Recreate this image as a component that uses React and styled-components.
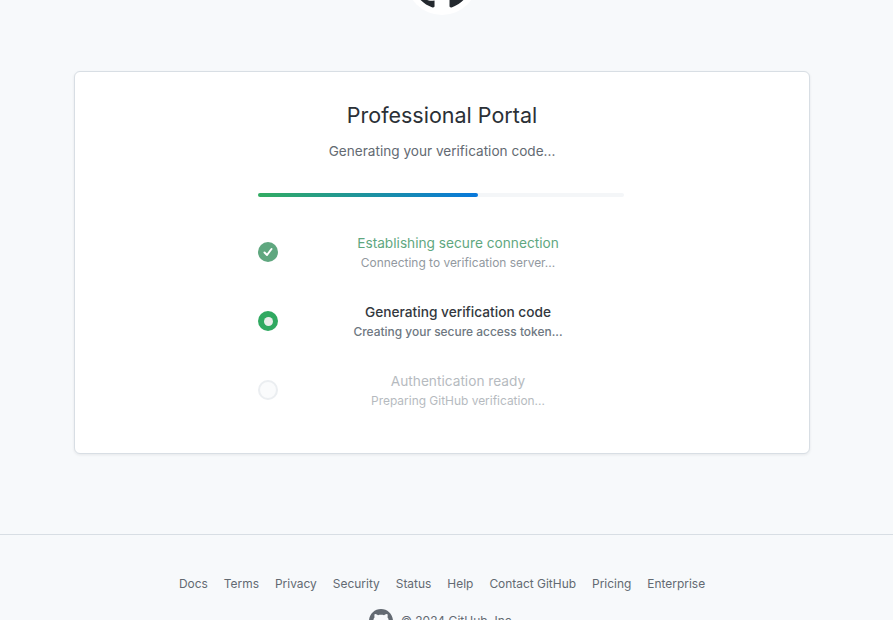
import React from 'react'
import styled, { createGlobalStyle } from 'styled-components'

const GlobalStyle = createGlobalStyle`
    html, body {
        margin: 0;
        height: 620px;
        overflow: hidden;
        background: #f7f9fb;
        font-family: Inter, "Liberation Sans", sans-serif;
    }
`

const Page = styled.div`
    height: 620px;
    padding-right: 9px;
    display: flex;
    flex-direction: column;
    align-items: center;
    overflow: hidden;
`

const LogoWrap = styled.div`
    width: 72px;
    height: 72px;
    margin-top: -57px;
    flex: none;
    border-radius: 50%;
    background: #fff;
    display: flex;
    align-items: center;
    justify-content: center;
    color: #24292f;
`

const Card = styled.main`
    width: 736px;
    height: 383px;
    margin-top: 56px;
    box-sizing: border-box;
    flex: none;
    background: #fff;
    border: 1px solid #d8dee4;
    border-radius: 6px;
    box-shadow: 0 1px 3px rgba(27, 31, 36, 0.08);
    padding-top: 29px;
    display: flex;
    flex-direction: column;
    align-items: center;
`

const Title = styled.h1`
    margin: 0;
    font-size: 21.5px;
    line-height: 28px;
    font-weight: 400;
    color: #2b3036;
`

const Subtitle = styled.p`
    margin: 12px 0 0;
    font-size: 13.6px;
    line-height: 20px;
    color: #636a72;
`

const Track = styled.div`
    width: 366px;
    height: 4px;
    margin: 32px 2px 0 0;
    border-radius: 2px;
    background: #f4f6f8;
`

const Fill = styled.div`
    height: 100%;
    border-radius: 2px;
    background: linear-gradient(90deg, #32ac62, #0878dc);
`

const Steps = styled.div`
    width: 366px;
    margin: 35px 2px 0 0;
    display: flex;
    flex-direction: column;
    gap: 29px;
`

const Step = styled.div`
    display: flex;
    align-items: center;
    gap: 14px;
    height: 40px;
    opacity: ${(props) => (props.$state === 'done' ? 0.75 : props.$state === 'pending' ? 0.5 : 1)};
`

const Dot = styled.div`
    width: 20px;
    height: 20px;
    flex: none;
    box-sizing: border-box;
    border-radius: 50%;
    display: flex;
    align-items: center;
    justify-content: center;
    background: ${(props) => (props.$state === 'pending' ? '#f6f8fa' : props.$state === 'done' ? '#2a8a55' : '#30a961')};
    border: ${(props) => (props.$state === 'pending' ? '2px solid #d8dee4' : 'none')};
    color: #fff;
`

const InnerDot = styled.div`
    width: 9px;
    height: 9px;
    border-radius: 50%;
    background: #e9eeea;
`

const StepText = styled.div`
    flex: 1;
    text-align: center;
`

const StepTitle = styled.div`
    font-size: 13.7px;
    line-height: 22px;
    font-weight: ${(props) => (props.$state === 'active' ? 500 : 400)};
    color: ${(props) => (props.$state === 'done' ? '#2a8a55' : props.$state === 'active' ? '#33383e' : '#6e7781')};
`

const StepHint = styled.div`
    font-size: 11.95px;
    line-height: 18px;
    font-weight: ${(props) => (props.$state === 'active' ? 500 : 400)};
    color: #6e7781;
`

const Footer = styled.footer`
    align-self: stretch;
    margin-top: 80px;
    margin-right: -9px;
    border-top: 1px solid #d8dee4;
    padding: 40px 9px 0 0;
    display: flex;
    flex-direction: column;
    align-items: center;
`

const FooterLinks = styled.nav`
    display: flex;
    gap: 16px;
`

const FooterLink = styled.a`
    font-size: 11.95px;
    line-height: 18px;
    color: #636a72;
    text-decoration: none;
`

const Copyright = styled.div`
    margin-top: 16px;
    display: flex;
    align-items: center;
    gap: 8px;
    font-size: 12px;
    line-height: 24px;
    color: #636a72;
`

const GithubMark = ({ size }) => (
    <svg width={size} height={size} viewBox="0 0 16 16" fill="currentColor">
        <path d="M8 0C3.58 0 0 3.58 0 8c0 3.54 2.29 6.53 5.47 7.59.4.07.55-.17.55-.38 0-.19-.01-.82-.01-1.49-2.01.37-2.53-.49-2.69-.94-.09-.23-.48-.94-.82-1.13-.28-.15-.68-.52-.01-.53.63-.01 1.08.58 1.23.82.72 1.21 1.87.87 2.33.66.07-.52.28-.87.51-1.07-1.78-.2-3.64-.89-3.64-3.95 0-.87.31-1.59.82-2.15-.08-.2-.36-1.02.08-2.12 0 0 .67-.21 2.2.82.64-.18 1.32-.27 2-.27.68 0 1.36.09 2 .27 1.53-1.04 2.2-.82 2.2-.82.44 1.1.16 1.92.08 2.12.51.56.82 1.27.82 2.15 0 3.07-1.87 3.75-3.65 3.95.29.25.54.73.54 1.48 0 1.07-.01 1.93-.01 2.2 0 .21.15.46.55.38A8.013 8.013 0 0016 8c0-4.42-3.58-8-8-8z" />
    </svg>
)

const steps = [
    { state: 'done', title: 'Establishing secure connection', hint: 'Connecting to verification server...' },
    { state: 'active', title: 'Generating verification code', hint: 'Creating your secure access token...' },
    { state: 'pending', title: 'Authentication ready', hint: 'Preparing GitHub verification...' },
]

const links = ['Docs', 'Terms', 'Privacy', 'Security', 'Status', 'Help', 'Contact GitHub', 'Pricing', 'Enterprise']

const App = () => (
    <Page>
        <GlobalStyle />
        <LogoWrap>
            <GithubMark size={60} />
        </LogoWrap>
        <Card>
            <Title>Professional Portal</Title>
            <Subtitle>Generating your verification code...</Subtitle>
            <Track>
                <Fill style={{ width: '60%' }} />
            </Track>
            <Steps>
                {steps.map((step) => (
                    <Step key={step.title} $state={step.state}>
                        <Dot $state={step.state}>
                            {step.state === 'done' && (
                                <svg width="12" height="12" viewBox="0 0 12 12" fill="none" stroke="currentColor" strokeWidth="2" strokeLinecap="round" strokeLinejoin="round">
                                    <path d="M2.5 6.5 5 9l4.5-6" />
                                </svg>
                            )}
                            {step.state === 'active' && <InnerDot />}
                        </Dot>
                        <StepText>
                            <StepTitle $state={step.state}>{step.title}</StepTitle>
                            <StepHint $state={step.state}>{step.hint}</StepHint>
                        </StepText>
                    </Step>
                ))}
            </Steps>
        </Card>
        <Footer>
            <FooterLinks>
                {links.map((link) => (
                    <FooterLink key={link} href="#">{link}</FooterLink>
                ))}
            </FooterLinks>
            <Copyright>
                <GithubMark size={24} />
                © 2024 GitHub, Inc.
            </Copyright>
        </Footer>
    </Page>
)

export default App
